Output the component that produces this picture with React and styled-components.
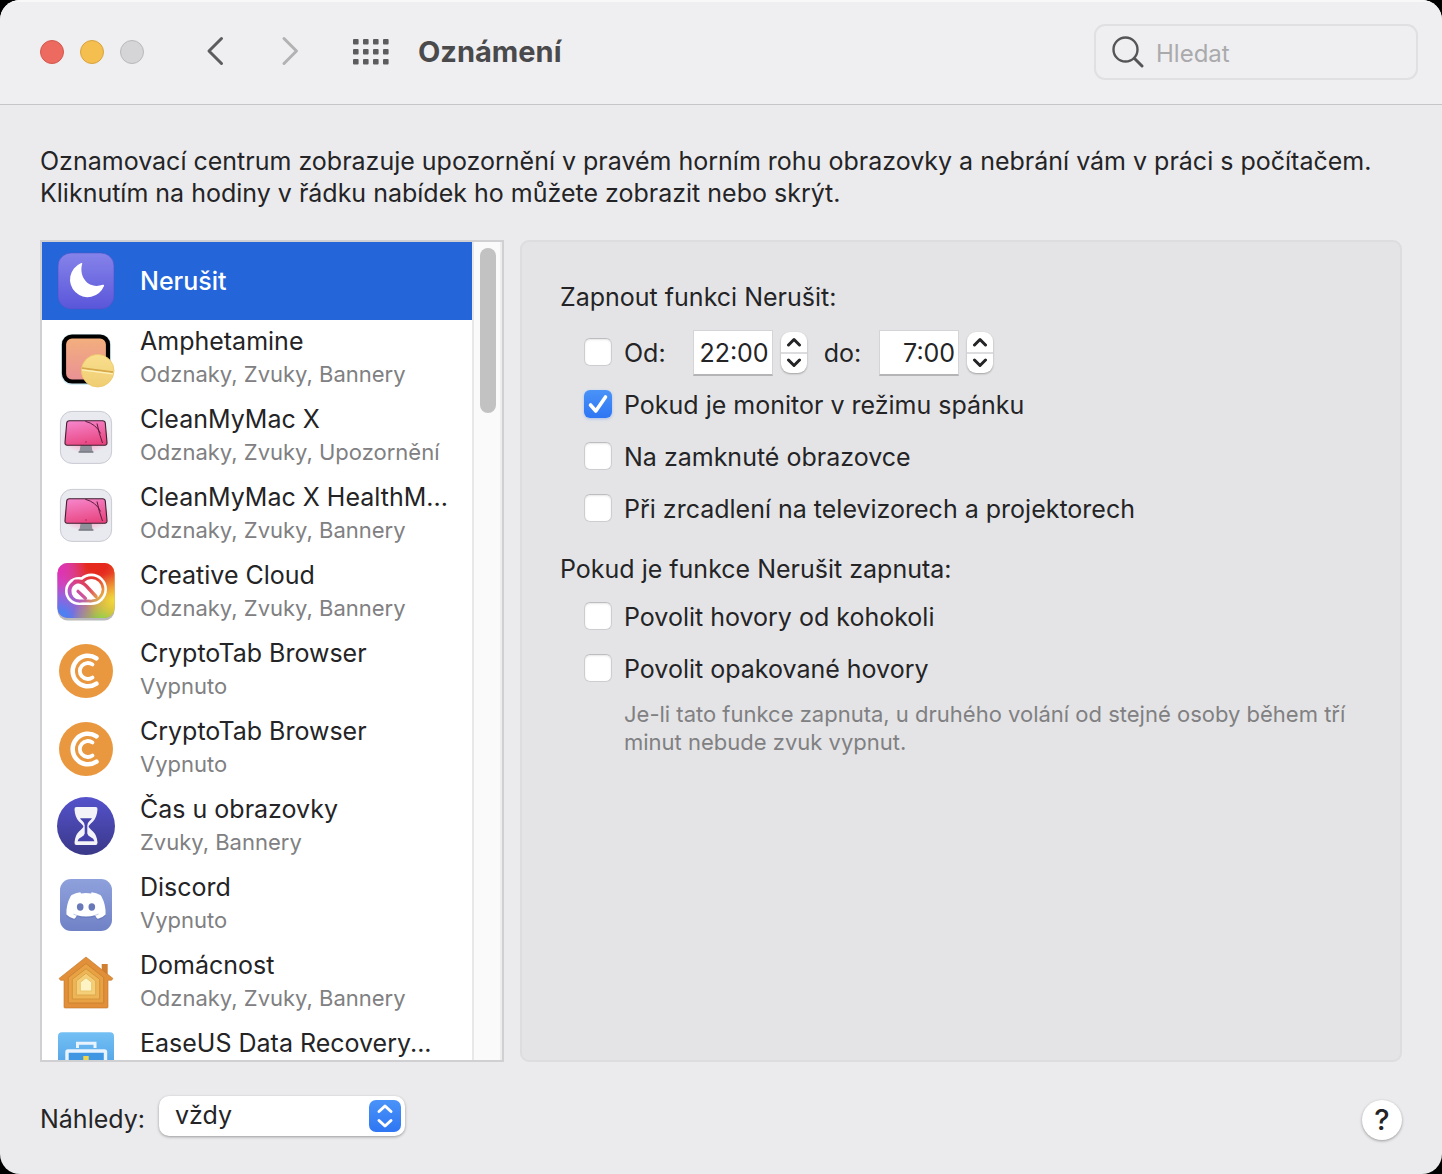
import React, { useState } from 'react';
import styled, { createGlobalStyle } from 'styled-components';

const GlobalStyle = createGlobalStyle`
  *, *::before, *::after { box-sizing: border-box; }
  body { margin: 0; background: #000; }
  body, button, input, select {
    font-family: Inter, "Liberation Sans", sans-serif;
    font-size: 25px;
    line-height: 32px;
    color: #242426;
  }
  button { padding: 0; border: 0; background: none; cursor: default; }
  svg { display: block; flex: none; }
`;

/* ---------- Window chrome ---------- */

const Window = styled.div`
  display: flex;
  flex-direction: column;
  height: 100vh;
  min-height: 720px;
  overflow: hidden;
  border-radius: 20px;
  background: #ebebed;
`;

const Toolbar = styled.header`
  display: flex;
  align-items: center;
  flex: none;
  height: 105px;
  padding: 0 24px 0 40px;
  background: #efeff1;
  border-bottom: 1px solid #c6c6c8;
  box-shadow: inset 0 2px 0 #f8f8f9;
`;

const TrafficLights = styled.div`
  display: flex;
  gap: 16px;
  margin-right: 60px;
`;

const Light = styled.button`
  width: 24px;
  height: 24px;
  border-radius: 50%;
  background: ${(p) => p.$fill};
  border: 1px solid ${(p) => p.$edge};
`;

const NavButtons = styled.nav`
  display: flex;
  gap: 50px;
  margin-right: 51px;
`;

const ToolButton = styled.button`
  color: ${(p) => (p.disabled ? '#b2b2b4' : '#5c5c5e')};
`;

const Title = styled.h1`
  flex: 1;
  margin: 0 0 0 29px;
  font-size: 29px;
  font-weight: 700;
  color: #4a4a4c;
`;

const SearchBox = styled.label`
  display: flex;
  align-items: center;
  gap: 12px;
  width: 324px;
  height: 56px;
  padding: 0 16px;
  border: 2px solid #e0e0e2;
  border-radius: 11px;
`;

const SearchInput = styled.input`
  flex: 1;
  min-width: 0;
  padding: 4px 0 0;
  border: 0;
  outline: 0;
  background: none;
  font-size: 24px;
  &::placeholder { color: #aaaaac; opacity: 1; }
`;

/* ---------- Body ---------- */

const Intro = styled.p`
  flex: none;
  margin: 0;
  padding: 40px 40px 31px;
`;

const Main = styled.main`
  display: grid;
  grid-template-columns: 464px minmax(0, 1fr);
  gap: 16px;
  flex: 1;
  min-height: 0;
  padding: 0 40px;
`;

const ListBox = styled.section`
  display: flex;
  min-height: 0;
  overflow: hidden;
  border: 2px solid #d0d0d2;
  background: #fff;
`;

const AppList = styled.ul`
  flex: 1;
  min-width: 0;
  margin: 0;
  padding: 0;
  overflow: hidden;
  list-style: none;
`;

const AppRow = styled.button`
  display: flex;
  align-items: center;
  gap: 24px;
  width: 100%;
  height: 78px;
  padding: 0 14px;
  text-align: left;
  background: ${(p) => (p.$selected ? '#2465d9' : 'transparent')};
`;

const RowText = styled.span`
  display: grid;
  gap: 3px;
  padding-bottom: ${(p) => (p.$single ? 0 : 5)}px;
`;

const AppName = styled.span`
  white-space: nowrap;
  font-weight: ${(p) => (p.$selected ? 500 : 400)};
  color: ${(p) => (p.$selected ? '#fff' : '#242426')};
`;

const AppDetail = styled.span`
  font-size: 22px;
  line-height: 28px;
  white-space: nowrap;
  color: #808082;
`;

const ScrollTrack = styled.div`
  flex: none;
  width: 30px;
  padding: 6px 6px;
  background: #fafafa;
  border-left: 2px solid #e8e8e8;
  border-right: 2px solid #ededed;
`;

const ScrollThumb = styled.div`
  width: 16px;
  height: 165px;
  border-radius: 8px;
  background: #c2c2c2;
`;

const Panel = styled.section`
  min-width: 0;
  padding: 39px 38px;
  border: 2px solid #dddddf;
  border-radius: 9px;
  background: #e4e4e6;
`;

const Group = styled.fieldset`
  margin: 0 0 18px;
  padding: 0;
  border: 0;
`;

const GroupTitle = styled.legend`
  padding: 0;
  margin-bottom: ${(p) => p.$gap}px;
`;

const OptionRow = styled.div`
  display: flex;
  align-items: center;
  height: 52px;
  padding-left: 24px;
`;

const CheckLabel = styled.label`
  display: flex;
  align-items: center;
  gap: 12px;
`;

const CheckCell = styled.span`
  display: grid;
  padding-bottom: 2px;
  & > * { grid-area: 1 / 1; }
  svg { visibility: hidden; pointer-events: none; }
  input:checked + svg { visibility: visible; }
`;

const CheckInput = styled.input`
  appearance: none;
  width: 28px;
  height: 28px;
  margin: 0;
  border: 1px solid #cdcdcf;
  border-top-color: #bdbdbf;
  border-radius: 6px;
  background: #fff;
  box-shadow: inset 0 1px 2px rgba(0, 0, 0, 0.1);
  &:checked {
    border-color: transparent;
    background: linear-gradient(#4a93f8, #2e76f3) border-box;
    box-shadow: 0 1px 3px rgba(46, 118, 243, 0.35);
  }
`;

const TimeFields = styled.div`
  display: flex;
  align-items: center;
  margin-left: 27px;
`;

const TimeInput = styled.input`
  width: 80px;
  height: 46px;
  padding: 0 3px;
  text-align: right;
  border: 1px solid #d4d4d6;
  border-bottom: 2px solid #b4b4b6;
  background: #fff;
`;

const Stepper = styled.span`
  display: grid;
  width: 26px;
  margin: 0 17px 2px 8px;
  border-radius: 9px;
  background: #fff;
  box-shadow: 0 1px 2px rgba(0, 0, 0, 0.3);
`;

const StepButton = styled.button`
  display: grid;
  place-items: center;
  height: 20px;
  & + & { height: 21px; border-top: 2px solid #dcdcde; }
`;

const TimeLabel = styled.label`
  margin-right: 18px;
`;

const Hint = styled.p`
  margin: 5px 0 0 64px;
  font-size: 22px;
  line-height: 28px;
  color: #808082;
`;

/* ---------- Footer ---------- */

const Footer = styled.footer`
  display: flex;
  align-items: flex-start;
  flex: none;
  padding: 34px 40px 32px;
`;

const FooterLabel = styled.label`
  margin-right: 14px;
  line-height: 46px;
`;

const SelectBox = styled.span`
  display: grid;
  align-items: center;
  width: 246px;
  height: 40px;
  border-radius: 10px;
  background: #fff;
  box-shadow: 0 1px 3px rgba(0, 0, 0, 0.35);
  & > * { grid-area: 1 / 1; }
`;

const Select = styled.select`
  appearance: none;
  width: 100%;
  height: 40px;
  padding: 0 48px 2px 16px;
  border: 0;
  border-radius: 10px;
  background: none;
`;

const SelectKnob = styled.span`
  display: grid;
  place-items: center;
  justify-self: end;
  width: 32px;
  height: 32px;
  margin-right: 4px;
  border-radius: 7px;
  background: linear-gradient(#4a93f8, #2e76f3);
  pointer-events: none;
`;

const HelpButton = styled.button`
  width: 40px;
  height: 40px;
  margin: 4px 0 0 auto;
  border-radius: 50%;
  background: #fff;
  font-size: 29px;
  font-weight: 500;
  box-shadow: 0 1px 3px rgba(0, 0, 0, 0.35);
`;

/* ---------- Icons ---------- */

const Icon = ({ children }) => (
  <svg width="60" height="60" viewBox="0 0 60 60" fill="none" aria-hidden="true">{children}</svg>
);

const MoonIcon = () => (
  <Icon>
    <defs>
      <linearGradient id="moon" x1="0" y1="0" x2="0" y2="1">
        <stop stopColor="#8683ea" /><stop offset="1" stopColor="#5a56da" />
      </linearGradient>
    </defs>
    <rect x="2" y="2" width="56" height="56" rx="13" fill="url(#moon)" stroke="#4a55c8" strokeWidth=".6" />
    <path d="M26.2 12.800C22.500 25.500 32 38.800 46.800 33.800q1.600-.4 1.200 1.200A17.600 17.600 0 1 1 24.800 12.300q1.700-.8 1.400.5Z" fill="#fff" />
  </Icon>
);

const AmphetamineIcon = () => (
  <Icon>
    <defs>
      <linearGradient id="amph" x1="0" y1="0" x2="0" y2="1">
        <stop stopColor="#f3b07c" /><stop offset="1" stopColor="#e99096" />
      </linearGradient>
      <linearGradient id="pill" x1="0" y1="0" x2="0" y2="1">
        <stop stopColor="#f9df8e" /><stop offset="1" stopColor="#efcd72" />
      </linearGradient>
    </defs>
    <rect x="5" y="5" width="50" height="51" rx="11" fill="#bfe3ee" opacity=".7" />
    <rect x="8" y="7.5" width="44" height="45" rx="8" fill="url(#amph)" stroke="#000" strokeWidth="4.2" />
    <circle cx="41.7" cy="41.7" r="16.3" fill="url(#pill)" stroke="#ecc766" strokeWidth=".8" />
    <path d="m26 39.2 31 4" stroke="#d5a94a" strokeWidth="1.8" />
    <path d="m26 40.8 31 4" stroke="#fdf0bd" strokeWidth="1.2" />
  </Icon>
);

const CleanMacIcon = () => (
  <Icon>
    <defs>
      <linearGradient id="clean" x1=".3" y1="0" x2=".6" y2="1">
        <stop stopColor="#f583c8" /><stop offset="1" stopColor="#e84580" />
      </linearGradient>
      <radialGradient id="cleanGlow">
        <stop offset=".4" stopColor="#f8a9c8" /><stop offset="1" stopColor="#f8a9c8" stopOpacity="0" />
      </radialGradient>
    </defs>
    <rect x="4.4" y="4.4" width="51.2" height="52" rx="11.5" fill="#e9e9f0" stroke="#c9cad2" />
    <ellipse cx="30" cy="31" rx="25" ry="15" fill="url(#cleanGlow)" />
    <path d="M24.6 38h11l.6 5 1 2.6H22.8l1-2.6Z" fill="#8f929b" />
    <path d="M22.5 45h15" stroke="#74777f" strokeWidth="1.2" />
    <path d="M13.3 13.8h33.4q2.3 0 2.6 2.2L51 35.5q.2 2.7-2.2 2.7H11.2Q8.8 38.2 9 35.5L10.7 16q.3-2.2 2.6-2.2Z" fill="url(#clean)" stroke="#3e2030" strokeWidth="1.1" />
    <path d="M29.3 14.3Q40 17 44.6 26.500M41 16.500q2 10 5.500 19.500" stroke="#5b1d3c" strokeWidth="1" />
    <circle cx="30" cy="35" r=".8" fill="#a3285a" />
  </Icon>
);

const CC_LAYERS = ['ccBase', 'ccRed', 'ccPink', 'ccBlue', 'ccGreen', 'ccYellow'];

const CreativeCloudIcon = () => (
  <Icon>
    <defs>
      <linearGradient id="ccBase" x1="0" y1="0" x2="1" y2="0">
        <stop stopColor="#b453d8" /><stop offset=".5" stopColor="#d9569a" /><stop offset="1" stopColor="#ef8a2c" />
      </linearGradient>
      <radialGradient id="ccRed" cx=".7" cy="0" r=".7">
        <stop offset=".25" stopColor="#e5291c" /><stop offset="1" stopColor="#e5291c" stopOpacity="0" />
      </radialGradient>
      <radialGradient id="ccPink" cx="0" cy=".12" r=".5">
        <stop stopColor="#e52fae" /><stop offset="1" stopColor="#e52fae" stopOpacity="0" />
      </radialGradient>
      <radialGradient id="ccBlue" cx=".05" cy="1" r=".6">
        <stop offset=".2" stopColor="#4d80f0" /><stop offset="1" stopColor="#6f6cf0" stopOpacity="0" />
      </radialGradient>
      <radialGradient id="ccGreen" cx=".8" cy="1.05" r=".55">
        <stop offset=".1" stopColor="#7ad24e" /><stop offset="1" stopColor="#a8d04e" stopOpacity="0" />
      </radialGradient>
      <radialGradient id="ccYellow" cx="1" cy=".68" r=".5">
        <stop stopColor="#f2dc3a" /><stop offset="1" stopColor="#f2c83a" stopOpacity="0" />
      </radialGradient>
      <mask id="ccMark">
        <circle cx="23" cy="28" r="14" fill="#fff" />
        <circle cx="35.3" cy="26.3" r="15.7" fill="#fff" />
        <path d="M23 30h12v12H23Z" fill="#fff" />
        <circle cx="23" cy="28" r="11.4" fill="#000" />
        <circle cx="35.3" cy="26.3" r="13.1" fill="#000" />
        <path d="M23 30h12v9.400H23Z" fill="#000" />
        <circle cx="35.5" cy="26.3" r="10.2" fill="#fff" />
        <path d="M15.500 28a7.800 7.800 0 0 1 13.500-5.300L40 34l-4.500 2.500H23.300A7.800 7.800 0 0 1 15.500 28Z" fill="#fff" />
        <path d="M19 18.200c5.600 0 8.600 1.800 11.200 4.600L40 33.500" stroke="#000" strokeWidth="3.400" strokeLinecap="round" fill="none" />
        <path d="m22 28.300 7.500 7.200" stroke="#000" strokeWidth="3.200" strokeLinecap="round" fill="none" />
      </mask>
    </defs>
    <rect x="1.500" y="2.500" width="57" height="55" rx="10" fill="#8a8a8a" opacity=".6" />
    {CC_LAYERS.map((id) => (
      <rect key={id} x="1.500" width="57" height="55" rx="10" fill={`url(#${id})`} />
    ))}
    <rect width="60" height="60" fill="#fff" mask="url(#ccMark)" />
  </Icon>
);

const CryptoTabIcon = () => (
  <Icon>
    <circle cx="30" cy="30" r="27" fill="#e9983f" />
    <path d="M40.500 17.300A15.300 15.300 0 1 0 40.500 42.700" stroke="#fff" strokeWidth="4.600" strokeLinecap="round" />
    <path d="M36.500 23.500A8 8 0 1 0 36.500 36.500" stroke="#fff" strokeWidth="3.800" strokeLinecap="round" />
  </Icon>
);

const HourglassIcon = () => (
  <Icon>
    <defs>
      <linearGradient id="glass" x1="0" y1="0" x2="0" y2="1">
        <stop stopColor="#5552cc" /><stop offset="1" stopColor="#3a3888" />
      </linearGradient>
    </defs>
    <circle cx="30" cy="29" r="29" fill="url(#glass)" />
    <path d="M20.500 10h19q2.300 0 2 2.200-.6 8.300-4.500 12.300-4.400 4-4.400 5t4.400 5q4 4 4.500 11 .1 2.500-2 2.500h-19q-2.200 0-2-2.500.5-7 4.500-11 4.400-4 4.400-5t-4.400-5q-4-4-4.500-12.300-.2-2.200 2-2.200Z" fill="#f4f4f8" />
    <path d="M24 21.200h12q-.6 1.300-2.500 2.800-2 1.700-2.200 4.500v8q.4 2 3.200 3.500 3.400 1.500 4 4.200H21.500q.6-2.700 4-4.200 2.800-1.500 3.200-3.500v-8q-.2-2.800-2.200-4.500-1.900-1.500-2.500-2.800Z" fill="#4644ac" />
  </Icon>
);

const CLYDE = 'M24.300 17.200 25 18.500q5-.8 10 0l.7-1.300q4.800.6 8.600 2.900.8.600 1.200 1.500Q50 30 49.600 39.500q-3 3.200-7.600 4.200-.8 0-1.300-.7l-1.700-2.700q-9 2.600-18 0L19.300 43q-.5.700-1.300.7-4.600-1-7.600-4.200Q10 30 14.500 21.600q.4-.9 1.200-1.500 3.800-2.300 8.600-2.900Z';

const DiscordIcon = () => (
  <Icon>
    <defs>
      <linearGradient id="discord" x1="0" y1="0" x2="0" y2="1">
        <stop stopColor="#8fa1dc" /><stop offset="1" stopColor="#7082c6" />
      </linearGradient>
    </defs>
    <rect x="4" y="4" width="52" height="52" rx="11" fill="url(#discord)" />
    <path d={CLYDE} fill="#5b6cb0" opacity=".4" transform="translate(0 1.500)" />
    <path d={CLYDE} fill="#fff" />
    <path d="M17.500 39q1.500.9 3.500 1.400M42.500 39q-1.500.9-3.500 1.400" stroke="#b4bee4" strokeWidth=".8" />
    <ellipse cx="24.200" cy="32" rx="3.300" ry="3.700" fill="#6878b8" />
    <ellipse cx="35.800" cy="32" rx="3.300" ry="3.700" fill="#6878b8" />
  </Icon>
);

const HomeIcon = () => (
  <Icon>
    <path d="M45.700 11h6v12h-6Z" fill="#d07e30" />
    <path d="M30 4 57 25.500l-1.500 1.800H52V54q0 1-1 1H9q-1 0-1-1V27.300H4.500L3 25.500Z" fill="#e18f38" stroke="#c1742a" strokeWidth=".6" />
    <path d="M30 10.500 47.700 24.500V50H12.300V24.500Z" fill="#e8a244" stroke="#c98232" strokeWidth=".9" />
    <path d="M30 15.700 43.700 26.300V46H16.300V26.300Z" fill="#eeb557" stroke="#d09038" strokeWidth=".9" />
    <path d="M30 20.300 39.700 28V42H20.300V28Z" fill="#f4cf78" stroke="#dba54a" strokeWidth=".9" />
    <path d="M30 24.800 35.700 29.300V38H24.300V29.300Z" fill="#fdf3c4" stroke="#e8c268" strokeWidth=".9" />
  </Icon>
);

const EaseUsIcon = () => (
  <Icon>
    <defs>
      <linearGradient id="ease" x1="0" y1="0" x2="0" y2="1">
        <stop stopColor="#74c0f4" /><stop offset="1" stopColor="#3a8fe0" />
      </linearGradient>
    </defs>
    <rect x="2" y="1.300" width="56" height="57" rx="4" fill="url(#ease)" />
    <path d="M21.500 17v-4.700h17.500V17" stroke="#e8f3fd" strokeWidth="3" />
    <rect x="11" y="20" width="38.500" height="30" rx="1" fill="#3f97e4" stroke="#e8f3fd" strokeWidth="3.400" />
    <path d="M27.300 25h5.400v8h-5.400Z" fill="#f2d64a" />
  </Icon>
);

const Chevron = ({ d }) => (
  <svg width="24" height="32" viewBox="0 0 24 32" fill="none" stroke="currentColor" strokeWidth="3" strokeLinecap="round" strokeLinejoin="round" aria-hidden="true">
    <path d={d} />
  </svg>
);

const GridIcon = () => (
  <svg width="36" height="26" viewBox="0 0 36 26" fill="currentColor" aria-hidden="true">
    {[0, 1, 2].map((r) => [0, 1, 2, 3].map((c) => (
      <rect key={`${r}${c}`} x={c * 10} y={r * 10} width="5.600" height="5.600" rx="1" />
    )))}
  </svg>
);

const SearchIcon = () => (
  <svg width="32" height="32" viewBox="0 0 32 32" fill="none" stroke="#555557" strokeLinecap="round" aria-hidden="true">
    <circle cx="13.500" cy="13.500" r="12" strokeWidth="2.400" />
    <path d="m22.500 22.500 7.500 7.500" strokeWidth="3" />
  </svg>
);

const StepArrow = ({ d }) => (
  <svg width="16" height="10" viewBox="0 0 16 10" fill="none" stroke="#242426" strokeWidth="3" strokeLinecap="round" strokeLinejoin="round" aria-hidden="true">
    <path d={d} />
  </svg>
);

/* ---------- Data ---------- */

const APPS = [
  { name: 'Nerušit', icon: MoonIcon },
  { name: 'Amphetamine', detail: 'Odznaky, Zvuky, Bannery', icon: AmphetamineIcon },
  { name: 'CleanMyMac X', detail: 'Odznaky, Zvuky, Upozornění', icon: CleanMacIcon },
  { name: 'CleanMyMac X HealthM...', detail: 'Odznaky, Zvuky, Bannery', icon: CleanMacIcon },
  { name: 'Creative Cloud', detail: 'Odznaky, Zvuky, Bannery', icon: CreativeCloudIcon },
  { name: 'CryptoTab Browser', detail: 'Vypnuto', icon: CryptoTabIcon },
  { name: 'CryptoTab Browser', detail: 'Vypnuto', icon: CryptoTabIcon },
  { name: 'Čas u obrazovky', detail: 'Zvuky, Bannery', icon: HourglassIcon },
  { name: 'Discord', detail: 'Vypnuto', icon: DiscordIcon },
  { name: 'Domácnost', detail: 'Odznaky, Zvuky, Bannery', icon: HomeIcon },
  { name: 'EaseUS Data Recovery...', detail: '\u00a0', icon: EaseUsIcon },
];

/* ---------- Parts ---------- */

const Checkbox = ({ id, label, checked }) => (
  <CheckLabel htmlFor={id}>
    <CheckCell>
      <CheckInput id={id} type="checkbox" defaultChecked={checked} />
      <svg width="28" height="28" viewBox="0 0 28 28" fill="none" aria-hidden="true">
        <path d="m6.500 15 5.300 6L21.500 7" stroke="#fff" strokeWidth="3.600" strokeLinecap="round" strokeLinejoin="round" />
      </svg>
    </CheckCell>
    {label}
  </CheckLabel>
);

const shift = (time, step) => {
  const [h, m] = time.split(':');
  return `${(Number(h) + step + 24) % 24}:${m}`;
};

const TimePicker = ({ id, label, initial }) => {
  const [time, setTime] = useState(initial);
  return (
    <>
      <TimeInput id={id} aria-label={label} value={time} onChange={(e) => setTime(e.target.value)} />
      <Stepper>
        <StepButton type="button" aria-label="Zvýšit" onClick={() => setTime(shift(time, 1))}>
          <StepArrow d="m2.500 8 5.500-5.500L13.500 8" />
        </StepButton>
        <StepButton type="button" aria-label="Snížit" onClick={() => setTime(shift(time, -1))}>
          <StepArrow d="m2.500 2 5.500 5.500L13.500 2" />
        </StepButton>
      </Stepper>
    </>
  );
};

export default function App() {
  const [selected, setSelected] = useState(0);
  return (
    <>
      <GlobalStyle />
      <Window>
        <Toolbar>
          <TrafficLights>
            <Light type="button" aria-label="Zavřít" $fill="#ec6a5f" $edge="#d5574c" />
            <Light type="button" aria-label="Minimalizovat" $fill="#f5bf50" $edge="#d9a23d" />
            <Light type="button" aria-label="Zvětšit" $fill="#d5d5d7" $edge="#b9b9bb" />
          </TrafficLights>
          <NavButtons>
            <ToolButton type="button" aria-label="Zpět"><Chevron d="M17.500 2.500 5 15l12.500 12.500" /></ToolButton>
            <ToolButton type="button" aria-label="Vpřed" disabled><Chevron d="M6 2.500 18.500 15 6 27.500" /></ToolButton>
          </NavButtons>
          <ToolButton type="button" aria-label="Zobrazit vše"><GridIcon /></ToolButton>
          <Title>Oznámení</Title>
          <SearchBox>
            <SearchIcon />
            <SearchInput type="search" placeholder="Hledat" aria-label="Hledat" />
          </SearchBox>
        </Toolbar>

        <Intro>
          Oznamovací centrum zobrazuje upozornění v pravém horním rohu obrazovky a nebrání vám v práci s počítačem.
          <br />
          Kliknutím na hodiny v řádku nabídek ho můžete zobrazit nebo skrýt.
        </Intro>

        <Main>
          <ListBox>
            <AppList>
              {APPS.map(({ name, detail, icon: AppIcon }, i) => (
                <li key={i}>
                  <AppRow type="button" $selected={i === selected} onClick={() => setSelected(i)}>
                    <AppIcon />
                    <RowText $single={!detail}>
                      <AppName $selected={i === selected}>{name}</AppName>
                      {detail && <AppDetail>{detail}</AppDetail>}
                    </RowText>
                  </AppRow>
                </li>
              ))}
            </AppList>
            <ScrollTrack><ScrollThumb /></ScrollTrack>
          </ListBox>

          <Panel>
            <Group>
              <GroupTitle $gap={14}>Zapnout funkci Nerušit:</GroupTitle>
              <OptionRow>
                <Checkbox id="schedule" label="Od:" />
                <TimeFields>
                  <TimePicker id="from" label="Od" initial="22:00" />
                  <TimeLabel htmlFor="to">do:</TimeLabel>
                  <TimePicker id="to" initial="7:00" />
                </TimeFields>
              </OptionRow>
              <OptionRow><Checkbox id="sleep" label="Pokud je monitor v režimu spánku" checked /></OptionRow>
              <OptionRow><Checkbox id="locked" label="Na zamknuté obrazovce" /></OptionRow>
              <OptionRow><Checkbox id="mirror" label="Při zrcadlení na televizorech a projektorech" /></OptionRow>
            </Group>
            <Group>
              <GroupTitle $gap={6}>Pokud je funkce Nerušit zapnuta:</GroupTitle>
              <OptionRow><Checkbox id="anyone" label="Povolit hovory od kohokoli" /></OptionRow>
              <OptionRow><Checkbox id="repeated" label="Povolit opakované hovory" /></OptionRow>
              <Hint>Je-li tato funkce zapnuta, u druhého volání od stejné osoby během tří minut nebude zvuk vypnut.</Hint>
            </Group>
          </Panel>
        </Main>

        <Footer>
          <FooterLabel htmlFor="previews">Náhledy:</FooterLabel>
          <SelectBox>
            <Select id="previews" defaultValue="vždy">
              <option>vždy</option>
            </Select>
            <SelectKnob>
              <svg width="20" height="26" viewBox="0 0 20 26" fill="none" stroke="#fff" strokeWidth="3" strokeLinecap="round" strokeLinejoin="round" aria-hidden="true">
                <path d="M4 8.500 10 3l6 5.500M4 17.500 10 23l6-5.500" />
              </svg>
            </SelectKnob>
          </SelectBox>
          <HelpButton type="button" aria-label="Nápověda">?</HelpButton>
        </Footer>
      </Window>
    </>
  );
}
